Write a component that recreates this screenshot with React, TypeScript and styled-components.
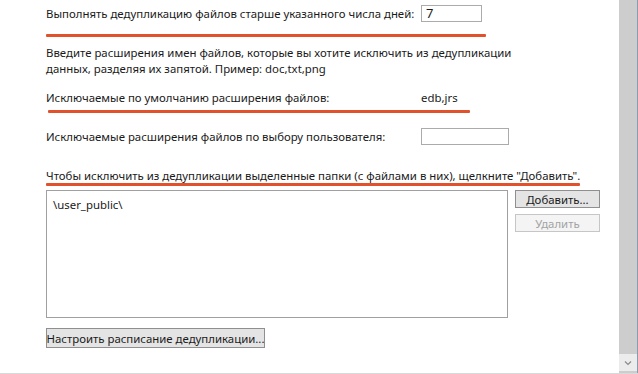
import React from "react";
import styled, { createGlobalStyle } from "styled-components";

const Global = createGlobalStyle`
  html, body { margin: 0; padding: 0; background: #fff; }
  body { font-family: "Noto Sans", "Open Sans", sans-serif; }
`;

const Window = styled.div`
  width: 638px;
  height: 374px;
  display: flex;
  box-sizing: border-box;
  border-bottom: 1px solid #d9d9d9;
  overflow: hidden;
`;

const Content = styled.div`
  flex: 1;
  padding: 5px 0 0 46px;
  font-size: 11.4px;
  color: #1a1a1a;
`;

const Row = styled.div<{ $mt?: number; $h?: number }>`
  display: flex;
  align-items: center;
  margin-top: ${({ $mt }) => $mt ?? 0}px;
  height: ${({ $h }) => $h ?? 17}px;
`;

const Label = styled.span<{ $w: number }>`
  width: ${({ $w }) => $w}px;
  white-space: nowrap;
`;

const Input = styled.div<{ $w: number }>`
  width: ${({ $w }) => $w}px;
  height: 17px;
  box-sizing: border-box;
  border: 1px solid #ababab;
  padding: 0 4px;
  font-size: 13px;
  line-height: 15px;
`;

const Mark = styled.div<{ $w: number; $mt: number; $ml?: number }>`
  width: ${({ $w }) => $w}px;
  height: 3px;
  margin-top: ${({ $mt }) => $mt}px;
  margin-left: ${({ $ml }) => $ml ?? 0}px;
  background: #e0512c;
  border-radius: 1px;
`;

const Para = styled.p`
  margin: 8px 0 0;
  line-height: 16px;
  width: 480px;
`;

const ListArea = styled.div`
  display: flex;
  gap: 7px;
  margin-top: 4px;
`;

const List = styled.div`
  width: 462px;
  height: 128px;
  box-sizing: border-box;
  border: 1px solid #a0a0a0;
  padding: 6px 6px;
`;

const Side = styled.div`
  display: flex;
  flex-direction: column;
  gap: 6px;
`;

const Button = styled.div<{ $disabled?: boolean; $w: number; $h?: number }>`
  width: ${({ $w }) => $w}px;
  height: ${({ $h }) => $h ?? 18}px;
  box-sizing: border-box;
  border: 1px solid ${({ $disabled }) => ($disabled ? "#c6c6c6" : "#8f8f8f")};
  background: ${({ $disabled }) => ($disabled ? "#f4f4f4" : "#e4e4e4")};
  color: ${({ $disabled }) => ($disabled ? "#a3a3a3" : "#1a1a1a")};
  display: flex;
  align-items: center;
  justify-content: center;
  white-space: nowrap;
`;

const Scroll = styled.div`
  width: 18px;
  display: flex;
  flex-direction: column;
  background: #cdcdcd;
  border-right: 1px solid #8c9bb0;
`;

const Track = styled.div`
  flex: 1;
`;

const Arrow = styled.div`
  height: 17px;
  margin-bottom: 2px;
  background: #ececec;
  display: flex;
  align-items: center;
  justify-content: center;
`;

export default function App() {
  return (
    <>
      <Global />
      <Window>
        <Content>
          <Row>
            <Label $w={375}>Выполнять дедупликацию файлов старше указанного числа дней:</Label>
            <Input $w={61}>7</Input>
          </Row>
          <Mark $w={440} $mt={12} />
          <Para>
            Введите расширения имен файлов, которые вы хотите исключить из дедупликации
            <br />
            данных, разделяя их запятой. Пример: doc,txt,png
          </Para>
          <Row $mt={12}>
            <Label $w={375}>Исключаемые по умолчанию расширения файлов:</Label>
            <span>edb,jrs</span>
          </Row>
          <Mark $w={422} $mt={4} $ml={2} />
          <Row $mt={15}>
            <Label $w={375}>Исключаемые расширения файлов по выбору пользователя:</Label>
            <Input $w={88} />
          </Row>
          <Row $mt={23} $h={14}>
            <Label $w={534}>
              Чтобы исключить из дедупликации выделенные папки (с файлами в них), щелкните "Добавить".
            </Label>
          </Row>
          <Mark $w={534} $mt={1} />
          <ListArea>
            <List>\user_public\</List>
            <Side>
              <Button $w={85}>Добавить...</Button>
              <Button $w={85} $disabled>
                Удалить
              </Button>
            </Side>
          </ListArea>
          <Row $mt={10} $h={20}>
            <Button $w={219} $h={20}>
              Настроить расписание дедупликации...
            </Button>
          </Row>
        </Content>
        <Scroll>
          <Track />
          <Arrow>
            <svg width="8" height="6" viewBox="0 0 8 6">
              <path d="M1 1.5 L4 4.5 L7 1.5" fill="none" stroke="#8a8a8a" strokeWidth="1.2" />
            </svg>
          </Arrow>
        </Scroll>
      </Window>
    </>
  );
}
